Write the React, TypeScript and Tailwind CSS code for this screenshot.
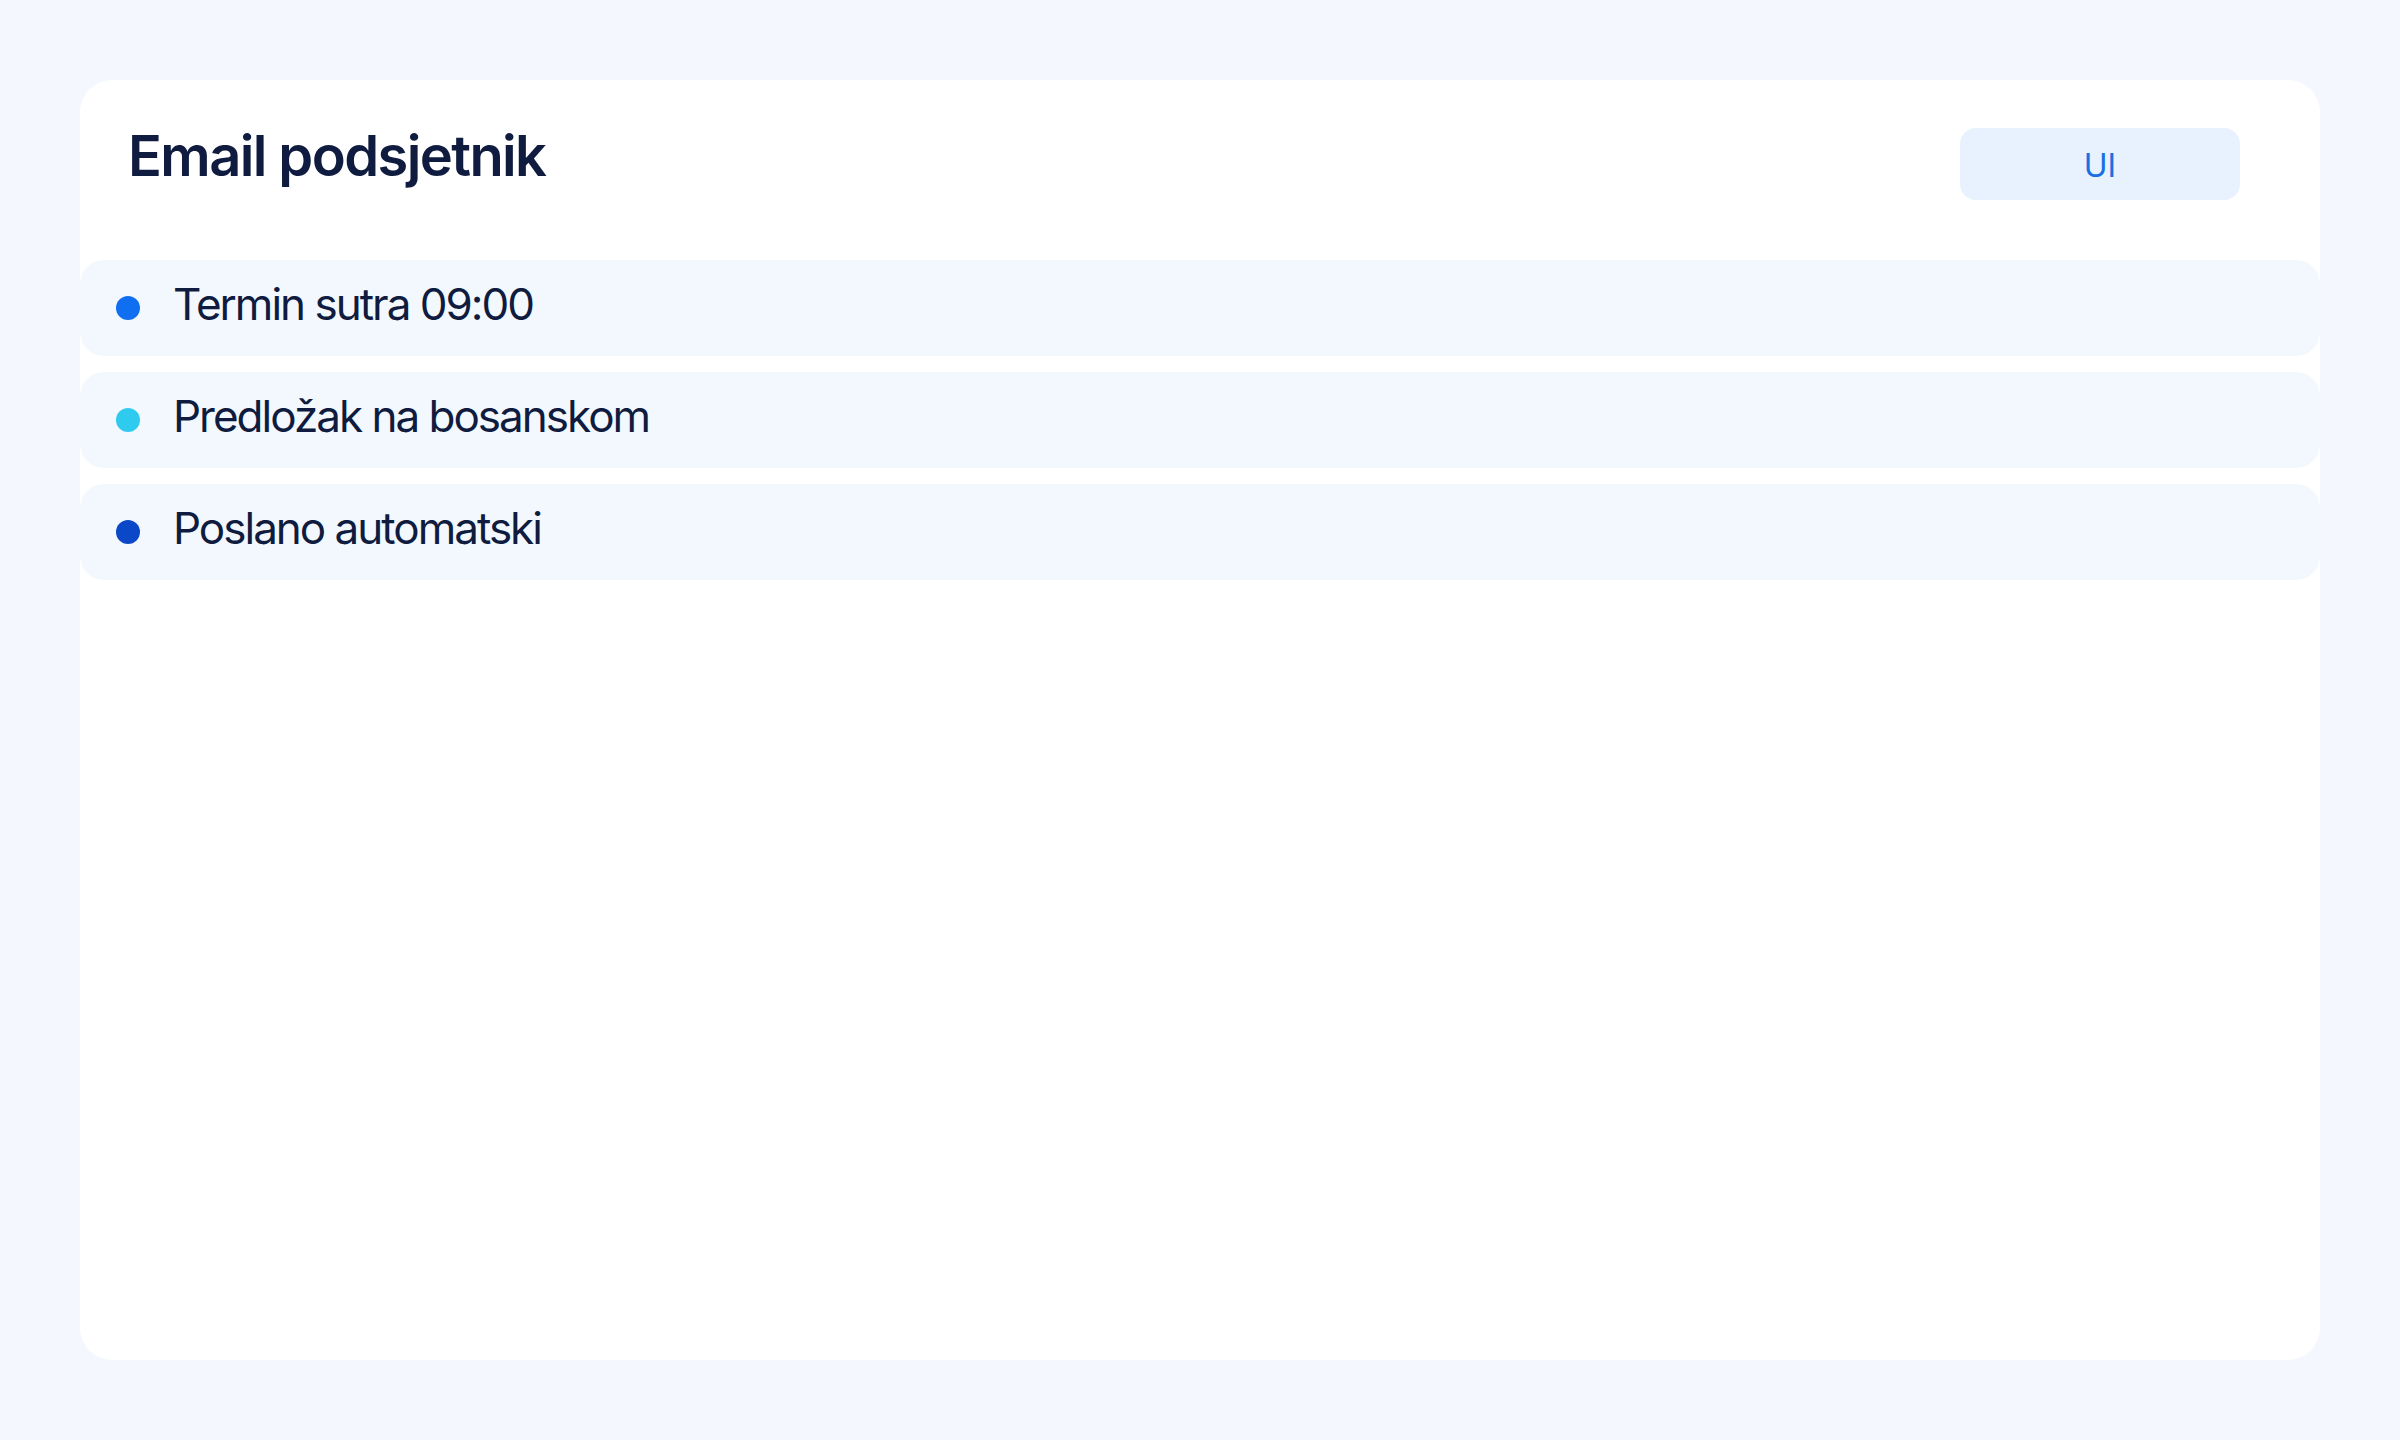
const items = [
  { label: "Termin sutra 09:00", dot: "bg-[#0f6ff0]" },
  { label: "Predložak na bosanskom", dot: "bg-[#2ecbee]" },
  { label: "Poslano automatski", dot: "bg-[#0a48c8]" },
];

export default function App() {
  return (
    <div className="min-h-screen w-full bg-[#f4f8fe] p-[80px] font-['Inter',sans-serif]">
      <div className="h-[1280px] w-full rounded-[32px] bg-white p-[48px]">
        {/* header */}
        <div className="flex items-start justify-between">
          <h1 className="text-[56px] font-semibold leading-none tracking-[-1.6px] text-[#0f1c3f]">
            Email podsjetnik
          </h1>
          <button className="mr-[32px] flex h-[72px] w-[280px] items-center justify-center rounded-[16px] bg-[#e7f2fe] pt-[3px] text-[32px] text-[#1a6fe2]">
            UI
          </button>
        </div>

        {/* list */}
        <div className="-mx-[48px] mt-[60px] flex flex-col gap-[16px]">
          {items.map((item) => (
            <div
              key={item.label}
              className="flex h-[96px] items-center gap-[33px] rounded-[24px] bg-[#f3f8fe] pl-[36px]"
            >
              <span className={`h-[24px] w-[24px] shrink-0 rounded-full ${item.dot}`} />
              <span className="mb-[8px] text-[44px] leading-none tracking-[-2px] text-[#0f1c3f]">
                {item.label}
              </span>
            </div>
          ))}
        </div>
      </div>
    </div>
  );
}
